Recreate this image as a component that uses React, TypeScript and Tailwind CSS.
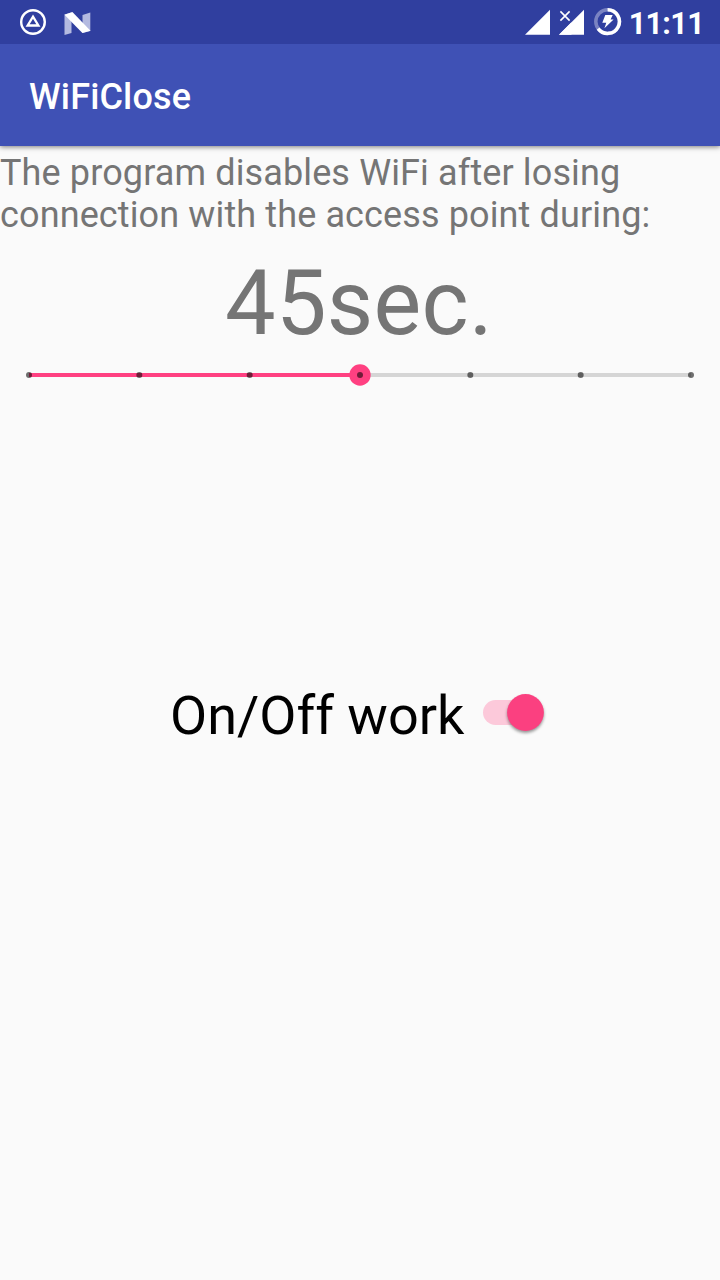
const STEPS = [0, 1, 2, 3, 4, 5, 6];

function StatusBar() {
  return (
    <div className="relative z-20 flex h-11 w-full shrink-0 items-center justify-between bg-[#303f9f] pl-[19px] pr-[16px] text-white">
      <div className="flex items-center gap-[17px]">
        <svg width="28" height="28" viewBox="0 0 28 28" fill="none">
          <circle cx="14" cy="14" r="11.8" stroke="white" strokeWidth="2.4" />
          <path d="M14 8.6 19.4 17.5H8.6z" stroke="white" strokeWidth="2.3" />
        </svg>
        <svg width="28" height="28" viewBox="0 0 28 28">
          <path d="M.5 6.5 7.5 4.5v20.5l-7 2z" fill="#b4bae0" />
          <path d="M18.5 7l7.8-2.5v18.5l-7.8 2z" fill="#b4bae0" />
          <path d="M.5 6.8 8.4 4l18.1 18.8-8.1 2.3z" fill="white" />
        </svg>
      </div>
      <div className="flex items-center">
        <svg width="97" height="28" viewBox="525 8 97 28" fill="none">
          <path d="M525 34.7 550 9.7V34.7z" fill="white" />
          <path d="M559 34.7 584 9.7V34.7z" fill="white" />
          <path d="M556 8h15.5v11.2L566 24h-10z" fill="#303f9f" />
          <path d="M559 34.7 571.5 22.2V34.7z" fill="white" />
          <path d="M560.4 11.4l9.2 9.2M569.6 11.4l-9.2 9.2" stroke="white" strokeWidth="1.6" />
          <circle cx="607.6" cy="21.6" r="11.8" stroke="#7a83c2" strokeWidth="3.5" />
          <path d="M607.6 9.8a11.8 11.8 0 1 1-9.5 18.8" stroke="white" strokeWidth="3.5" />
          <path d="M605.3 15h7.4l-2.1 4.5h3L604.4 28.2l1.9-5.5h-4z" fill="white" />
        </svg>
        <span className="ml-[7px] mt-[3px] text-[30.5px] leading-9 font-bold tracking-[-0.65px]">11:11</span>
      </div>
    </div>
  );
}

function Slider() {
  return (
    <svg className="mt-[4px] block" width="720" height="28" viewBox="0 361 720 28">
      <rect x="29" y="373" width="662" height="4" fill="#d5d5d5" />
      <rect x="29" y="373" width="331" height="4" fill="#ff4081" />
      <circle cx="360" cy="375" r="10.7" fill="#ff4081" />
      {STEPS.map((s) => (
        <circle key={s} cx={29 + (s * 662) / 6} cy="375" r="3" fill="black" fillOpacity="0.56" />
      ))}
    </svg>
  );
}

function Toggle() {
  return (
    <svg className="block" width="72" height="48" viewBox="478 688 72 48">
      <rect x="483" y="700" width="60" height="25" rx="12.5" fill="#fcc9da" />
      <circle className="drop-shadow-[0_2px_1.5px_rgba(0,0,0,0.4)]" cx="525.5" cy="712.5" r="18.4" fill="#fb4080" />
    </svg>
  );
}

export default function App() {
  return (
    <div className="flex h-[1280px] w-[720px] flex-col overflow-hidden bg-[#fafafa] font-['Roboto',sans-serif]">
      <StatusBar />
      <header className="z-10 flex h-[102px] shrink-0 items-center bg-[#3f51b5] pl-[29px] pt-[3px] shadow-[0_1px_5px_rgba(0,0,0,0.5)]">
        <h1 className="text-[36px] leading-[42px] font-medium tracking-[0.15px] text-white">WiFiClose</h1>
      </header>
      <main className="flex flex-col">
        <p className="mt-[6px] text-[36px] leading-[42px] tracking-[0.125px] text-[#757575]">
          The program disables WiFi after losing
          <br />
          connection with the access point during:
        </p>
        <div className="mt-[15px] pr-[2px] text-center text-[90px] leading-[106px] tracking-[0.3px] text-[#757575]">45sec.</div>
        <Slider />
        <div className="mt-[294px] flex pl-[170px]">
          <span className="w-[308px] whitespace-nowrap pt-px text-[54px] leading-[64px] text-black">On/Off work</span>
          <div className="pt-[5px]">
            <Toggle />
          </div>
        </div>
      </main>
    </div>
  );
}
